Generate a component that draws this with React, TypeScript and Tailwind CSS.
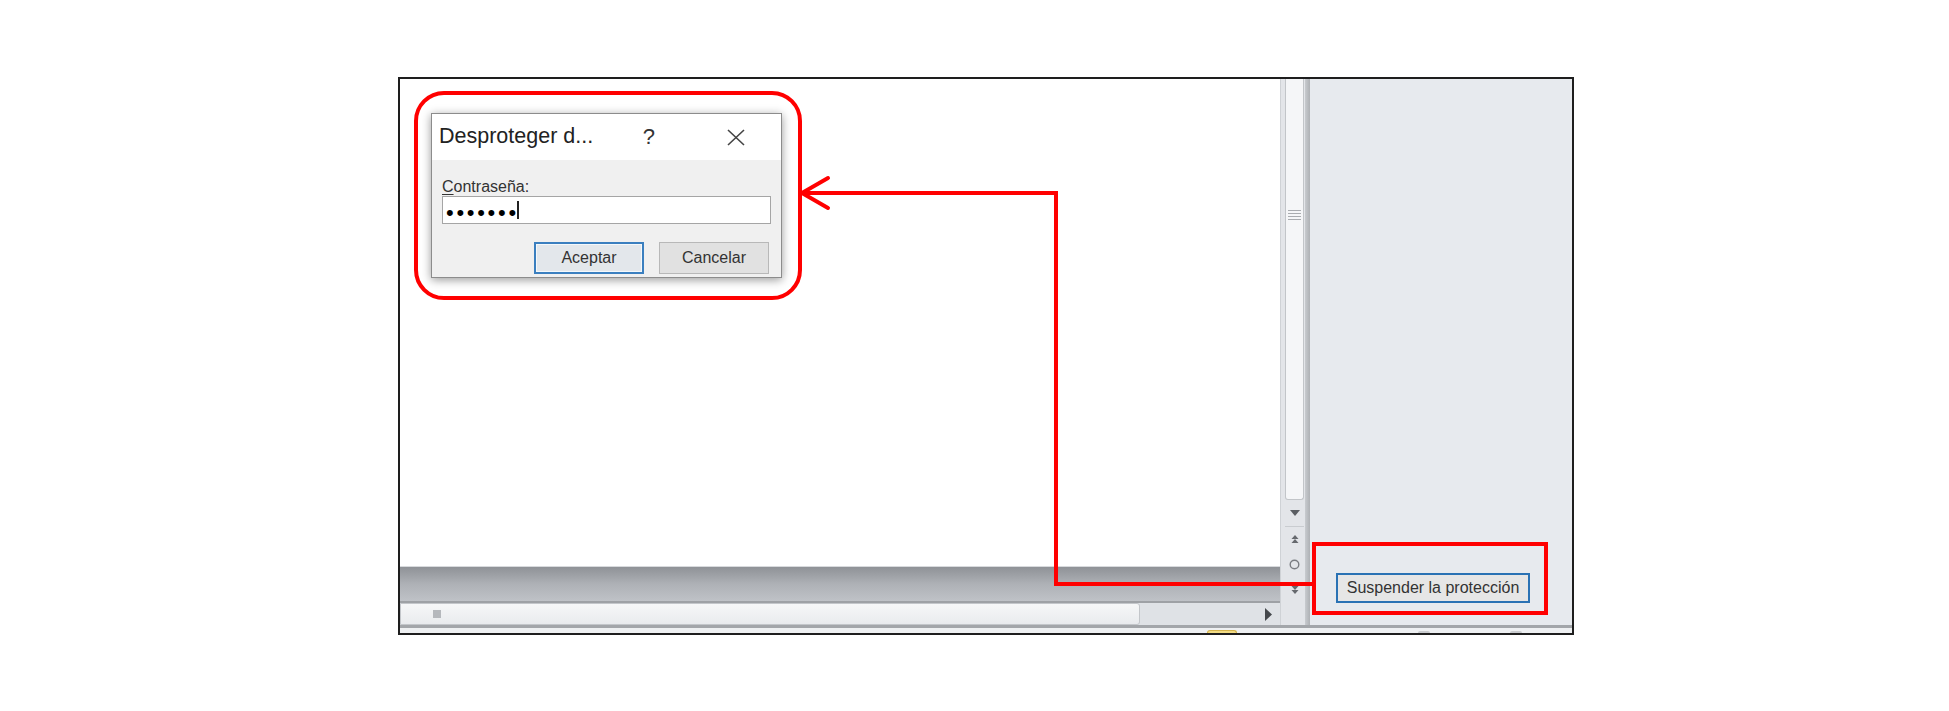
import React from "react";

const font = { fontFamily: '"Liberation Sans", Arial, sans-serif' };

function Dialog() {
  return (
    <div
      className="w-[351px] h-[165px] border border-[#8c8c8c] bg-[#f0f0f0] flex flex-col shadow-[0_2px_9px_rgba(0,0,0,0.4)]"
      style={font}
    >
      <div className="h-[46px] bg-white flex items-center pl-[7px] pr-[36px] text-[#222]">
        <span className="flex-1 text-[21.5px] leading-none">Desproteger d...</span>
        <span className="text-[22px] leading-none text-[#333]">?</span>
        <svg className="ml-[72px]" width="18" height="17" viewBox="0 0 18 17">
          <path d="M1 1 L17 16 M17 1 L1 16" stroke="#444" strokeWidth="1.6" fill="none" />
        </svg>
      </div>
      <div className="flex-1 flex flex-col pl-[10px] pr-[10px] pt-[18px]">
        <div className="h-[18px] text-[16px] leading-[17px] text-[#333]">
          <span className="underline underline-offset-2">C</span>ontraseña:
        </div>
        <div className="h-[28px] bg-white border border-[#a5a5a5] flex items-center pl-[3px]">
          <span className="text-[22px] leading-none tracking-[2.7px] text-black mt-[5px]">•••••••</span>
          <span className="w-[2px] h-[18px] bg-[#222] -ml-[2px]" />
        </div>
        <div className="flex justify-end gap-[15px] mt-[18px] pr-[2px]">
          <div className="w-[110px] h-[32px] border-2 border-[#3b7fbf] bg-[#e3e7eb] flex items-center justify-center text-[16px] text-[#333] shadow-[inset_0_0_0_1px_#f4f8fb]">
            Aceptar
          </div>
          <div className="w-[110px] h-[32px] border border-[#b8b8b8] bg-[#e1e1e1] flex items-center justify-center text-[16px] text-[#333]">
            Cancelar
          </div>
        </div>
      </div>
    </div>
  );
}

function VScroll() {
  return (
    <div className="w-[30px] flex bg-[#e3e5e9]">
      <div className="flex-1 flex flex-col pl-[4px] pr-[1px] border-l border-[#cfd2d6]">
        <div className="h-[421px] bg-[#f5f6f8] border-x border-b border-[#c2c5c9] rounded-b-[3px] flex flex-col items-center pt-[131px]">
          <div className="w-[13px] flex flex-col gap-[2px]">
            <div className="h-px bg-[#a9acb0]" />
            <div className="h-px bg-[#a9acb0]" />
            <div className="h-px bg-[#a9acb0]" />
            <div className="h-px bg-[#a9acb0]" />
          </div>
        </div>
        <div className="h-[26px] flex items-center justify-center">
          <svg width="10" height="6" viewBox="0 0 10 6">
            <path d="M0 0 L10 0 L5 6 Z" fill="#5b5e63" />
          </svg>
        </div>
        <div className="h-px bg-[#c9ccd0]" />
        <div className="h-[25px] flex items-center justify-center">
          <svg width="8" height="9" viewBox="0 0 8 9">
            <path d="M4 0 L7.5 4 L0.5 4 Z M4 4 L7.5 8 L0.5 8 Z" fill="#66696e" />
          </svg>
        </div>
        <div className="h-[25px] flex items-center justify-center">
          <svg width="11" height="11" viewBox="0 0 11 11">
            <circle cx="5.5" cy="5.5" r="4.3" stroke="#7a7d82" strokeWidth="1.4" fill="none" />
          </svg>
        </div>
        <div className="h-[25px] flex items-center justify-center">
          <svg width="8" height="9" viewBox="0 0 8 9">
            <path d="M0.5 1 L7.5 1 L4 5 Z M0.5 5 L7.5 5 L4 9 Z" fill="#66696e" />
          </svg>
        </div>
      </div>
      <div className="w-[5px] bg-gradient-to-r from-[#c8cbcf] to-[#aeb1b5]" />
    </div>
  );
}

export default function App() {
  return (
    <div className="relative w-[1949px] h-[711px] bg-white pt-[77px] pl-[398px]" style={font}>
      <div className="w-[1176px] h-[558px] border-2 border-[#1e1e1e] flex flex-col bg-white">
        <div className="h-[546px] flex">
          {/* document column */}
          <div className="w-[880px] flex flex-col">
            <div className="flex-1 bg-white pl-[14px] pt-[12px] border-b border-[#d8dadd]">
              <div className="w-[388px] h-[209px] border-4 border-[#ff0000] rounded-[30px] pl-[13px] pt-[18px]">
                <Dialog />
              </div>
            </div>
            <div className="h-[36px] bg-gradient-to-b from-[#8f9297] via-[#aeb1b6] to-[#bfc2c7] border-b-2 border-[#9ea1a5]" />
            <div className="h-[22px] flex bg-[#dfe2e6]">
              <div className="w-[740px] bg-gradient-to-b from-[#f6f7f8] to-[#e9ebee] border border-[#c3c6ca] rounded-r-[3px] flex items-center pl-[32px]">
                <div className="w-[8px] h-[8px] bg-[#b5b8bc]" />
              </div>
              <div className="flex-1 flex items-center justify-end pr-[8px]">
                <svg width="7" height="13" viewBox="0 0 7 13">
                  <path d="M0 0 L7 6.5 L0 13 Z" fill="#45484c" />
                </svg>
              </div>
            </div>
          </div>
          <VScroll />
          {/* right pane */}
          <div className="flex-1 bg-[#e7eaee] flex flex-col justify-end pb-[10px] pl-[2px]">
            <div className="w-[236px] h-[73px] border-4 border-[#ff0000] pl-[20px] pt-[27px]">
              <div className="w-[194px] h-[30px] border-2 border-[#2a72b4] bg-[#e6e6e6] flex items-center justify-center text-[16px] text-[#333] leading-none">
                Suspender la protección
              </div>
            </div>
          </div>
        </div>
        {/* status strip */}
        <div className="flex-1 flex flex-col">
          <div className="h-[3px] bg-[#a3a6aa]" />
          <div className="flex-1 bg-[#eef0f2] flex items-end">
            <div className="ml-[807px] w-[30px] h-[3px] rounded-t-full bg-[#f2dc85] border-t border-x border-[#d4b24a]" />
            <div className="ml-[181px] w-[12px] h-[2px] rounded-t-full bg-[#c9cbce]" />
            <div className="ml-[80px] w-[12px] h-[2px] rounded-t-full bg-[#c9cbce]" />
          </div>
        </div>
      </div>

      {/* annotation arrow */}
      <svg
        className="absolute left-0 top-0 pointer-events-none"
        width="1949"
        height="711"
        viewBox="0 0 1949 711"
      >
        <path
          d="M1313 584 L1056 584 L1056 193 L803 193"
          stroke="#ff0000"
          strokeWidth="4"
          fill="none"
          strokeLinejoin="miter"
        />
        <path
          d="M828 178 L802 193 L828 208"
          stroke="#ff0000"
          strokeWidth="4"
          fill="none"
          strokeLinecap="round"
          strokeLinejoin="miter"
        />
      </svg>
    </div>
  );
}
